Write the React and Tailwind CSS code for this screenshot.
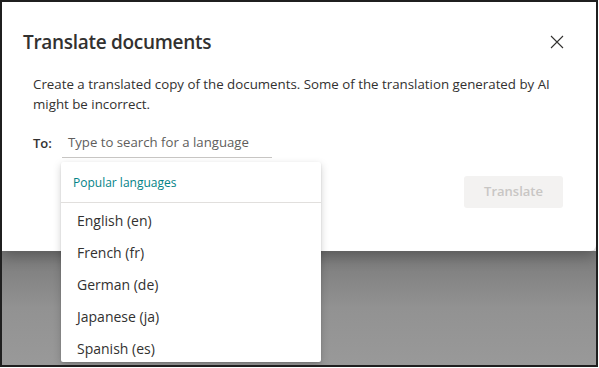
import React from 'react';

const languages = ['English (en)', 'French (fr)', 'German (de)', 'Japanese (ja)', 'Spanish (es)'];

const CloseIcon = () => (
  <svg width="14" height="14" viewBox="0 0 14 14" fill="none" stroke="#323130" strokeWidth="1.1">
    <path d="M1 1L13 13M13 1L1 13" />
  </svg>
);

const LanguageMenu = () => (
  <div className="absolute left-[59px] top-[160px] w-[260px] h-[200px] bg-white rounded-[2px] shadow-[0_3px_8px_rgba(0,0,0,0.18),0_1px_2px_rgba(0,0,0,0.12)] overflow-hidden">
    <div className="h-[41px] flex items-center px-[12px] pt-[2px] text-[12px] text-[#038387] border-b border-[#e1dfdd]">
      Popular languages
    </div>
    <div className="flex flex-col pt-[1px]">
      {languages.map((l) => (
        <div key={l} className="h-[32px] flex items-center px-[16px] text-[14px] text-[#323130]">
          {l}
        </div>
      ))}
    </div>
  </div>
);

export default function App() {
  return (
    <div className="w-[599px] h-[368px] bg-white" style={{ fontFamily: '"Open Sans", "Noto Sans", sans-serif' }}>
      <div className="relative w-[598px] h-[367px] border-2 border-[#1f1f1f] flex flex-col overflow-hidden">
        <div className="h-[249px] bg-white rounded-br-[6px] shadow-[0_6px_14px_rgba(0,0,0,0.25)] relative z-10 flex flex-col">
          <div className="flex items-center justify-between pl-[21px] pr-[32px] pt-[26px]">
            <h1 className="text-[19px] font-semibold text-[#323130] tracking-[-0.3px]">Translate documents</h1>
            <CloseIcon />
          </div>
          <p className="pl-[31px] pr-[30px] mt-[17px] text-[13.3px] leading-[20px] text-[#323130]">
            Create a translated copy of the documents. Some of the translation generated by AI might be incorrect.
          </p>
          <div className="flex items-center pl-[31px] mt-[16px]">
            <span className="text-[13px] font-semibold text-[#323130] w-[29px] pt-[1px]">To:</span>
            <div className="w-[210px] h-[28px] border-b border-[#c8c6c4] flex items-center px-[6px] text-[13.2px] text-[#605e5c]">
              Type to search for a language
            </div>
          </div>
          <div className="flex justify-end pr-[33px] mt-[18px]">
            <button className="w-[99px] h-[32px] bg-[#f3f2f1] rounded-[3px] text-[13px] font-semibold text-[#c8c6c4]">
              Translate
            </button>
          </div>
        </div>
        <div className="flex-1 bg-gradient-to-b from-[#7a7a7a] via-[#929292] to-[#999999]" />
        <div className="absolute inset-0 z-20 pointer-events-none">
          <LanguageMenu />
        </div>
      </div>
    </div>
  );
}
